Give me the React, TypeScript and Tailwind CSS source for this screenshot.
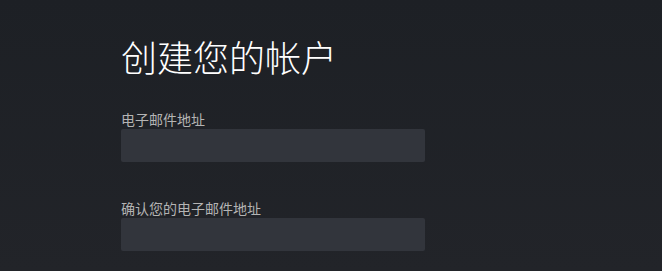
export default function App() {
  return (
    <div className="w-[662px] h-[271px] overflow-hidden bg-gradient-to-b from-[#1d2025] to-[#222429] font-['Noto_Sans_CJK_SC',sans-serif]">
      <div className="pl-[121px] pt-[38px] w-[425px]">
        <h1 className="text-[36px] leading-[36px] font-light text-white">创建您的帐户</h1>

        <div className="mt-[38px]">
          <label className="block text-[14px] leading-[14px] text-[#b4b4b4]">电子邮件地址</label>
          <input
            type="email"
            className="mt-[3px] block w-[304px] h-[33px] rounded-[2px] bg-[#32353c] outline-none px-2 text-sm text-white"
          />
        </div>

        <div className="mt-[39px]">
          <label className="block text-[14px] leading-[14px] text-[#b4b4b4]">确认您的电子邮件地址</label>
          <input
            type="email"
            className="mt-[3px] block w-[304px] h-[33px] rounded-[2px] bg-[#32353c] outline-none px-2 text-sm text-white"
          />
        </div>
      </div>
    </div>
  );
}
